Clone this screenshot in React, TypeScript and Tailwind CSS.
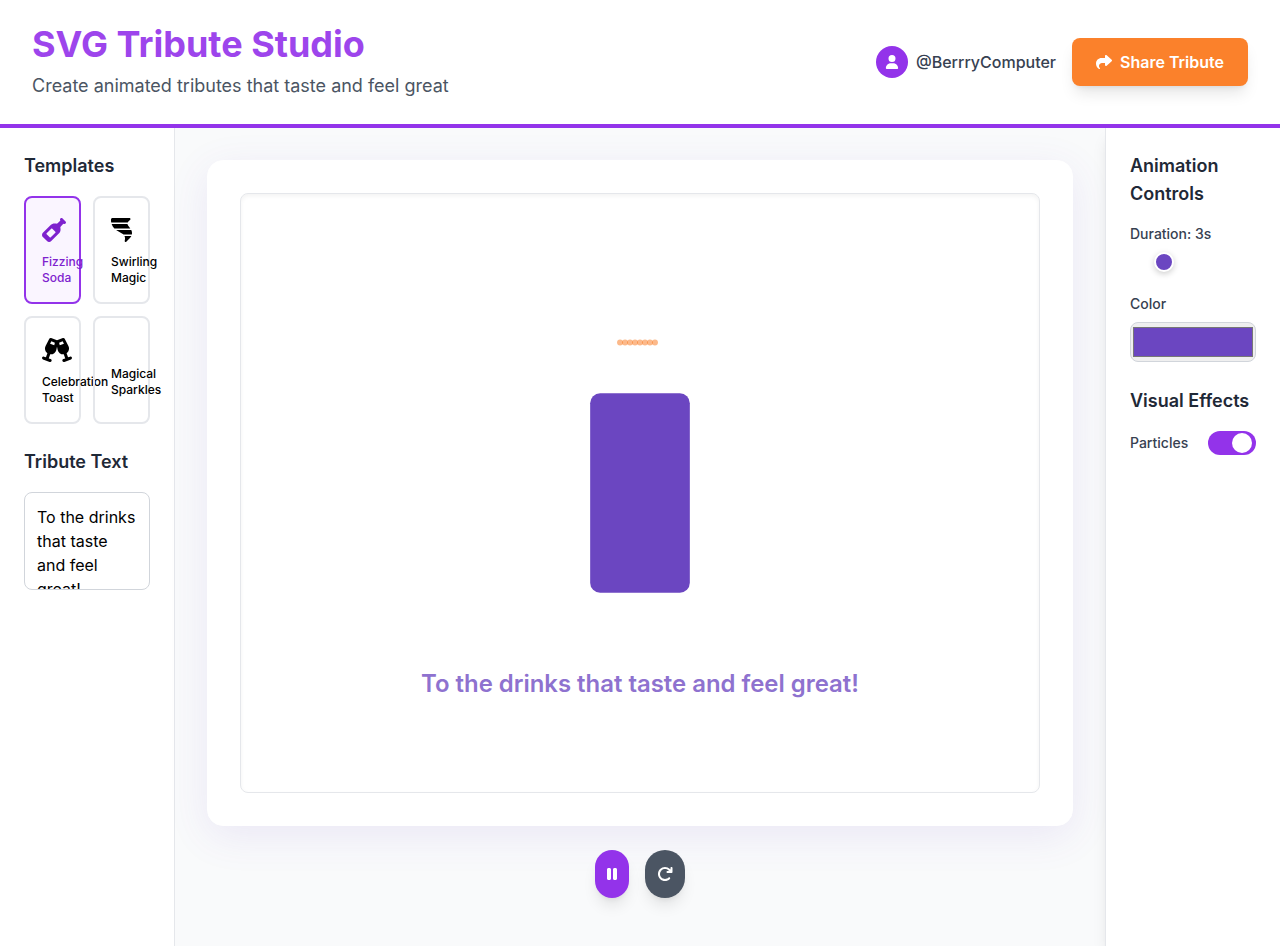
import { useState } from "react"
import { FaArrowRotateRight, FaChampagneGlasses, FaShare, FaTornado, FaUser, FaWineBottle } from "react-icons/fa6"

const templates = [
  { id: "soda", label: "Fizzing Soda", icon: FaWineBottle, iconWidth: "w-6" },
  { id: "swirl", label: "Swirling Magic", icon: FaTornado, iconWidth: "w-[21px]" },
  { id: "toast", label: "Celebration Toast", icon: FaChampagneGlasses, iconWidth: "w-[30px]" },
  { id: "sparkles", label: "Magical Sparkles", icon: null, iconWidth: "" },
]

const bubbles = [0, 1, 2, 3, 4, 5, 6, 7]

function Header() {
  return (
    <header className="flex items-center justify-between border-b-4 border-[#9333ea] bg-white px-8 py-6">
      <div>
        <h1 className="text-4xl font-bold text-[#9d45ec]">SVG Tribute Studio</h1>
        <p className="mt-2 text-lg text-[#4b5563]">Create animated tributes that taste and feel great</p>
      </div>
      <div className="flex items-center gap-4">
        <div className="flex items-center gap-2">
          <div className="flex size-8 items-center justify-center rounded-full bg-[#9333ea] text-sm text-white">
            <FaUser />
          </div>
          <span className="font-medium text-[#374151]">@BerrryComputer</span>
        </div>
        <button type="button" className="flex items-center gap-2 rounded-lg bg-[#fb812b] px-6 py-3 font-semibold text-white shadow-lg">
          <FaShare />
          Share Tribute
        </button>
      </div>
    </header>
  )
}

type TemplatesPanelProps = {
  template: string
  text: string
  onTemplateChange: (id: string) => void
  onTextChange: (text: string) => void
}

function TemplatesPanel({ template, text, onTemplateChange, onTextChange }: TemplatesPanelProps) {
  return (
    <aside className="w-80 min-w-0 border-r border-[#e5e7eb] bg-white p-6">
      <h2 className="mb-4 text-lg font-semibold text-[#1f2937]">Templates</h2>
      <div className="mb-6 grid grid-cols-2 gap-3">
        {templates.map((item) => {
          const Icon = item.icon
          return (
            <button
              key={item.id}
              type="button"
              onClick={() => onTemplateChange(item.id)}
              className={
                item.id === template
                  ? "min-w-0 rounded-lg border-2 border-[#9333ea] bg-[#faf5ff] p-4 text-left text-[#7e22ce]"
                  : "min-w-0 rounded-lg border-2 border-[#e5e7eb] p-4 text-left text-black"
              }
            >
              {Icon ? (
                <div className="mb-2 flex h-8 items-center text-2xl">
                  <Icon className={`shrink-0 ${item.iconWidth}`} />
                </div>
              ) : (
                <div className="mb-2 h-4" />
              )}
              <div className="text-xs font-medium">{item.label}</div>
            </button>
          )
        })}
      </div>
      <h2 className="mb-4 text-lg font-semibold text-[#1f2937]">
        <label htmlFor="tribute-text">Tribute Text</label>
      </h2>
      <textarea
        id="tribute-text"
        rows={3}
        value={text}
        onChange={(e) => onTextChange(e.target.value)}
        className="block w-full resize-none rounded-lg border border-[#d1d5db] p-3 text-black [scrollbar-width:none]"
      />
    </aside>
  )
}

function Stage({ text, color, particles }: { text: string; color: string; particles: boolean }) {
  return (
    <main className="flex-1 bg-[#f9fafb] p-8">
      <div className="mx-auto w-fit rounded-2xl border border-white bg-white p-8 shadow-[0_10px_40px_rgba(107,70,193,0.1)]">
        <svg
          width="800"
          height="600"
          viewBox="0 0 800 600"
          className="rounded-lg border border-[#e5e7eb] shadow-[inset_0_2px_4px_rgba(0,0,0,0.05)]"
        >
          <rect x="350" y="200" width="100" height="200" rx="10" fill={color} />
          {particles &&
            bubbles.map((i) => <circle key={i} cx={380 + i * 5} cy="149" r="3" fill="#f97316" opacity="0.5" />)}
          <text x="400" y="500" textAnchor="middle" fontSize="24" fontWeight="600" fill={color} opacity="0.76">
            {text}
          </text>
        </svg>
      </div>
      <div className="mt-6 flex justify-center gap-4">
        <button type="button" aria-label="Pause" className="rounded-full bg-[#9333ea] p-3 text-white shadow-lg">
          <span className="flex h-6 items-center">
            <svg width="10" height="16" viewBox="0 0 320 512" fill="currentColor">
              <path d="M48 64C21.500 64 0 85.500 0 112v288c0 26.500 21.500 48 48 48h32c26.500 0 48-21.500 48-48V112c0-26.500-21.500-48-48-48zm192 0c-26.500 0-48 21.500-48 48v288c0 26.500 21.500 48 48 48h32c26.500 0 48-21.500 48-48V112c0-26.500-21.500-48-48-48z" />
            </svg>
          </span>
        </button>
        <button type="button" aria-label="Restart" className="rounded-full bg-[#4b5563] p-3 text-white shadow-lg">
          <span className="flex h-6 items-center">
            <FaArrowRotateRight />
          </span>
        </button>
      </div>
    </main>
  )
}

type ControlsPanelProps = {
  duration: number
  color: string
  particles: boolean
  onDurationChange: (duration: number) => void
  onColorChange: (color: string) => void
  onParticlesChange: (particles: boolean) => void
}

function ControlsPanel({ duration, color, particles, onDurationChange, onColorChange, onParticlesChange }: ControlsPanelProps) {
  return (
    <aside className="w-80 min-w-0 border-l border-[#e5e7eb] bg-white p-6 shadow-lg">
      <h2 className="mb-4 text-lg font-semibold text-[#1f2937]">Animation Controls</h2>
      <label htmlFor="duration" className="mb-2 block text-sm font-medium text-[#374151]">
        Duration: {duration}s
      </label>
      <input
        id="duration"
        type="range"
        min={1}
        max={10}
        value={duration}
        onChange={(e) => onDurationChange(Number(e.target.value))}
        className="mb-[22px] block h-5 w-full appearance-none bg-transparent [&::-webkit-slider-thumb]:size-5 [&::-webkit-slider-thumb]:appearance-none [&::-webkit-slider-thumb]:rounded-full [&::-webkit-slider-thumb]:border-2 [&::-webkit-slider-thumb]:border-white [&::-webkit-slider-thumb]:bg-[#6b46c1] [&::-webkit-slider-thumb]:shadow-[0_2px_6px_rgba(0,0,0,0.2)]"
      />
      <label htmlFor="color" className="mb-2 block text-sm font-medium text-[#374151]">
        Color
      </label>
      <input
        id="color"
        type="color"
        value={color}
        onChange={(e) => onColorChange(e.target.value)}
        className="mb-[25px] block h-10 w-full rounded-lg border border-[#d1d5db] bg-[#efefef] p-0"
      />
      <h2 className="mb-4 text-lg font-semibold text-[#1f2937]">Visual Effects</h2>
      <label className="flex items-center justify-between text-sm font-medium text-[#374151]">
        Particles
        <input
          type="checkbox"
          role="switch"
          checked={particles}
          onChange={(e) => onParticlesChange(e.target.checked)}
          className="flex h-6 w-12 appearance-none items-center rounded-full bg-[#d1d5db] px-1 before:size-5 before:rounded-full before:bg-white checked:justify-end checked:bg-[#9333ea]"
        />
      </label>
    </aside>
  )
}

function App() {
  const [template, setTemplate] = useState("soda")
  const [text, setText] = useState("To the drinks that taste and feel great!")
  const [duration, setDuration] = useState(3)
  const [color, setColor] = useState("#6b46c1")
  const [particles, setParticles] = useState(true)

  return (
    <div className="flex min-h-screen flex-col bg-white font-[Inter,sans-serif]">
      <Header />
      <div className="flex flex-1">
        <TemplatesPanel template={template} text={text} onTemplateChange={setTemplate} onTextChange={setText} />
        <Stage text={text} color={color} particles={particles} />
        <ControlsPanel
          duration={duration}
          color={color}
          particles={particles}
          onDurationChange={setDuration}
          onColorChange={setColor}
          onParticlesChange={setParticles}
        />
      </div>
    </div>
  )
}

export default App
